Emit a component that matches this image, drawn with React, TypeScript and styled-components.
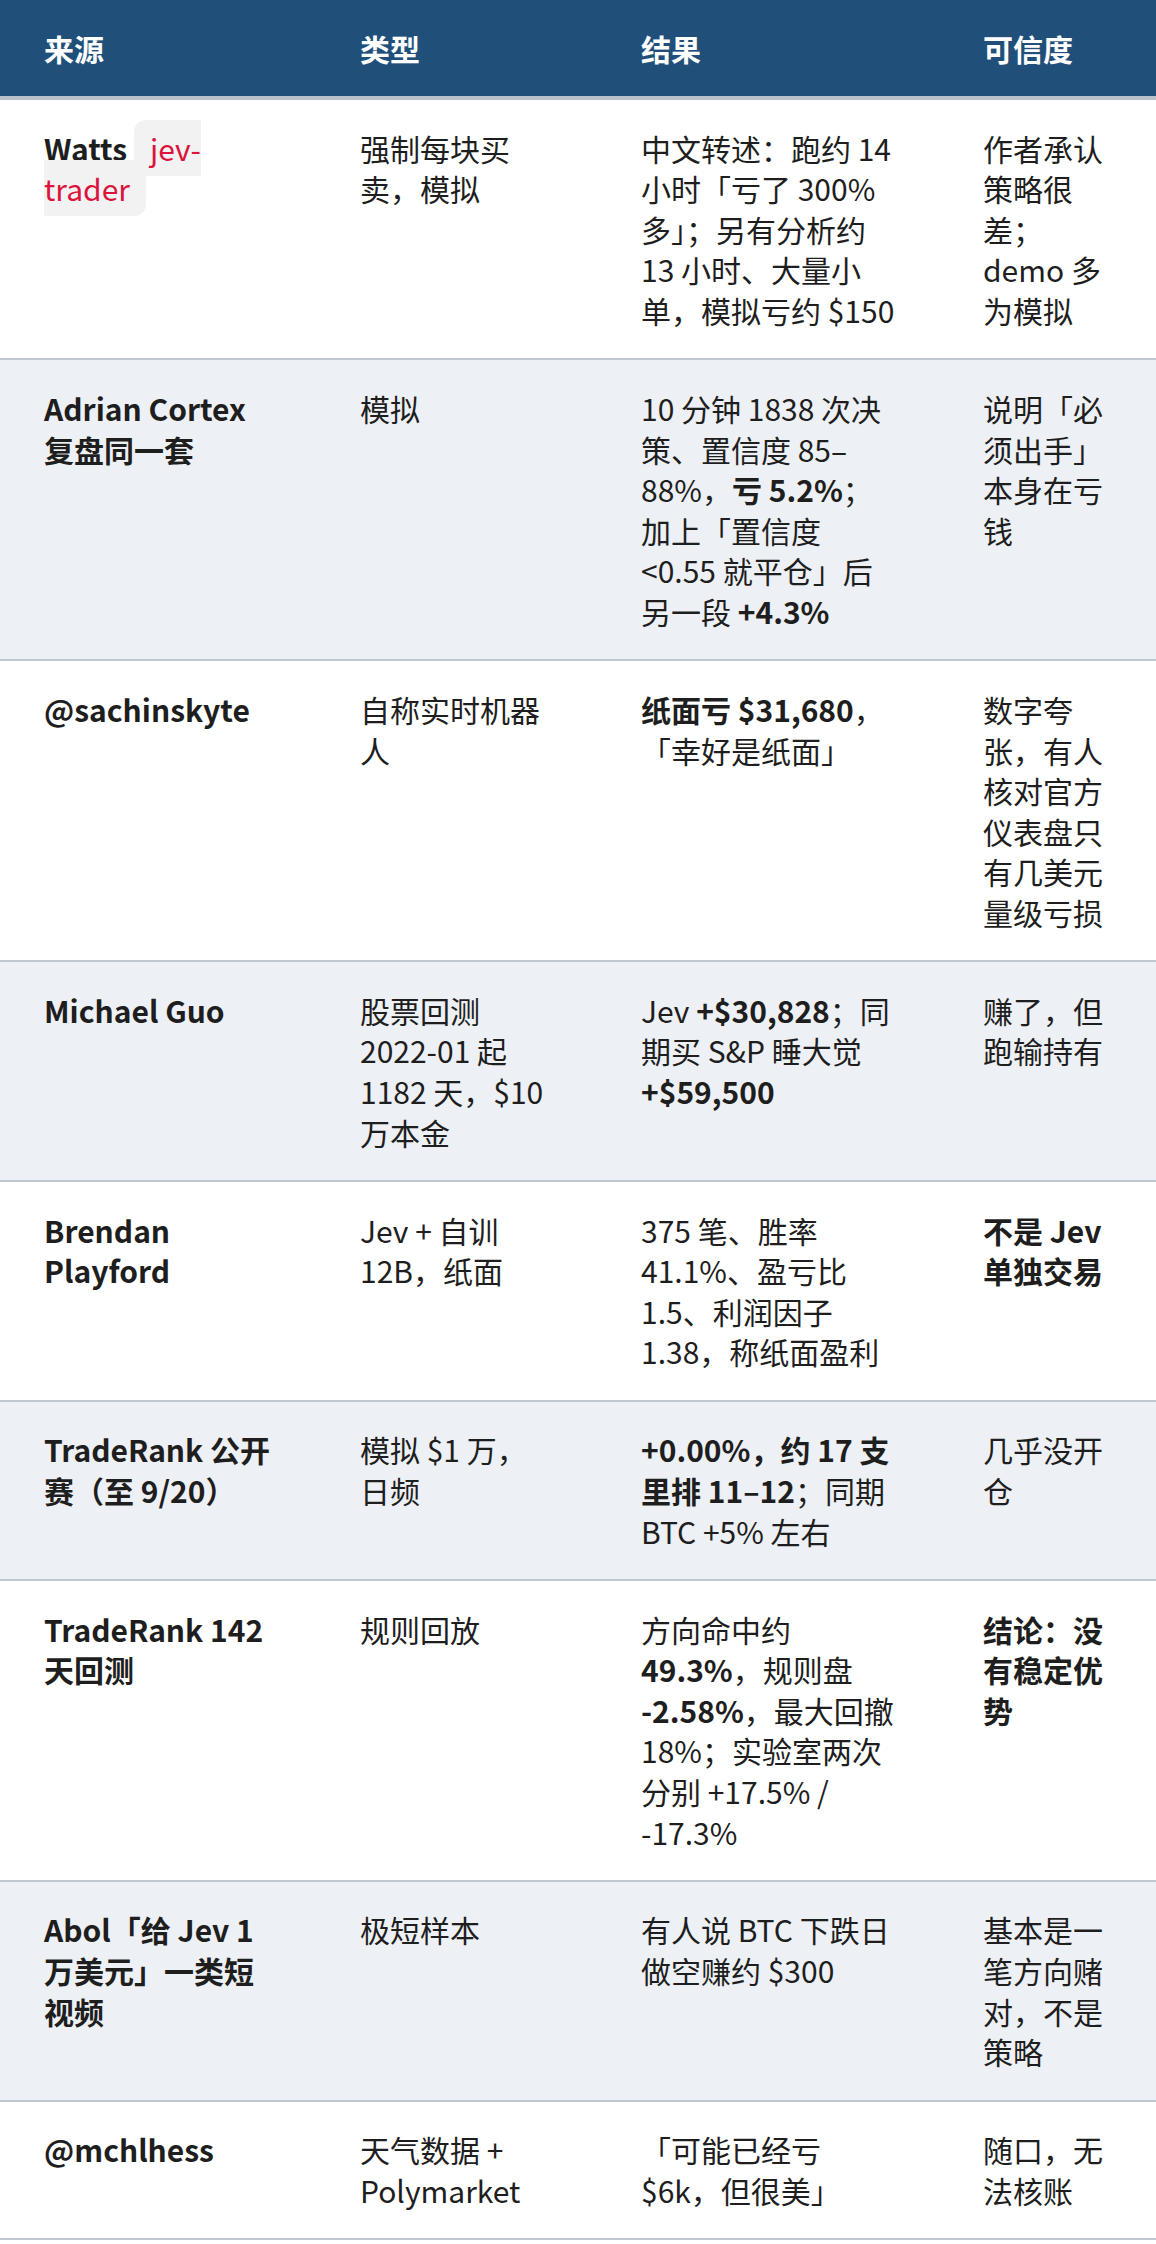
import React from 'react';
import styled, { createGlobalStyle } from 'styled-components';

const GlobalStyle = createGlobalStyle`
    html, body {
        margin: 0;
        padding: 0;
        background: #fff;
    }
    body {
        font-family: 'Noto Sans CJK SC', 'Noto Sans', sans-serif;
        color: #1e1e1e;
    }
`;

const Table = styled.table`
    width: 1156px;
    table-layout: fixed;
    border-collapse: collapse;
    border-spacing: 0;
    font-size: 30px;
    line-height: 40.6px;
`;

const Col = styled.col<{ $w: number }>`
    width: ${(p) => p.$w}px;
`;

const HeadCell = styled.th`
    background: #204f7a;
    color: #fff;
    font-weight: 700;
    text-align: left;
    padding: 27.7px 44px;
    border-bottom: 4px solid #b9c1cb;
`;

const BodyRow = styled.tr<{ $alt: boolean }>`
    background: ${(p) => (p.$alt ? '#edf0f4' : '#fff')};
    border-bottom: 2px solid #c1c7d0;
`;

const Cell = styled.td`
    vertical-align: top;
    text-align: left;
    padding: 27.7px 44px;
    font-weight: 400;
`;

const SourceCell = styled(Cell)`
    font-weight: 700;
`;

const B = styled.strong`
    font-weight: 700;
`;

const Code = styled.code`
    font-family: inherit;
    font-weight: 400;
    color: #dc143c;
    background: #f2f2f2;
    padding: 6px 16px;
    border-radius: 12px;
`;

type Row = {
    source: React.ReactNode;
    kind: React.ReactNode;
    result: React.ReactNode;
    trust: React.ReactNode;
};

const rows: Row[] = [
    {
        source: (
            <>
                Watts <Code>jev-trader</Code>
            </>
        ),
        kind: '强制每块买卖，模拟',
        result: '中文转述：跑约 14 小时「亏了 300% 多」；另有分析约 13 小时、大量小单，模拟亏约 $150',
        trust: '作者承认策略很差；demo 多为模拟',
    },
    {
        source: 'Adrian Cortex 复盘同一套',
        kind: '模拟',
        result: (
            <>
                10 分钟 1838 次决策、置信度 85–88%，<B>亏 5.2%</B>；加上「置信度 &lt;0.55 就平仓」后另一段{' '}
                <B>+4.3%</B>
            </>
        ),
        trust: '说明「必须出手」本身在亏钱',
    },
    {
        source: '@sachinskyte',
        kind: '自称实时机器人',
        result: (
            <>
                <B>纸面亏 $31,680</B>，「幸好是纸面」
            </>
        ),
        trust: '数字夸张，有人核对官方仪表盘只有几美元量级亏损',
    },
    {
        source: 'Michael Guo',
        kind: '股票回测 2022-01 起 1182 天，$10 万本金',
        result: (
            <>
                Jev <B>+$30,828</B>；同期买 S&amp;P 睡大觉 <B>+$59,500</B>
            </>
        ),
        trust: '赚了，但跑输持有',
    },
    {
        source: 'Brendan Playford',
        kind: 'Jev + 自训 12B，纸面',
        result: '375 笔、胜率 41.1%、盈亏比 1.5、利润因子 1.38，称纸面盈利',
        trust: <B>不是 Jev 单独交易</B>,
    },
    {
        source: 'TradeRank 公开赛（至 9/20）',
        kind: '模拟 $1 万，日频',
        result: (
            <>
                <B>+0.00%，约 17 支里排 11–12</B>；同期 BTC +5% 左右
            </>
        ),
        trust: '几乎没开仓',
    },
    {
        source: 'TradeRank 142 天回测',
        kind: '规则回放',
        result: (
            <>
                方向命中约 <B>49.3%</B>，规则盘 <B>-2.58%</B>，最大回撤 18%；实验室两次分别 +17.5% / -17.3%
            </>
        ),
        trust: <B>结论：没有稳定优势</B>,
    },
    {
        source: 'Abol「给 Jev 1 万美元」一类短视频',
        kind: '极短样本',
        result: '有人说 BTC 下跌日做空赚约 $300',
        trust: '基本是一笔方向赌对，不是策略',
    },
    {
        source: '@mchlhess',
        kind: '天气数据 + Polymarket',
        result: '「可能已经亏 $6k，但很美」',
        trust: '随口，无法核账',
    },
];

export default function App() {
    return (
        <>
            <GlobalStyle />
            <Table>
                <colgroup>
                    <Col $w={316} />
                    <Col $w={281} />
                    <Col $w={342} />
                    <Col $w={217} />
                </colgroup>
                <thead>
                    <tr>
                        <HeadCell>来源</HeadCell>
                        <HeadCell>类型</HeadCell>
                        <HeadCell>结果</HeadCell>
                        <HeadCell>可信度</HeadCell>
                    </tr>
                </thead>
                <tbody>
                    {rows.map((r, i) => (
                        <BodyRow key={i} $alt={i % 2 === 1}>
                            <SourceCell>{r.source}</SourceCell>
                            <Cell>{r.kind}</Cell>
                            <Cell>{r.result}</Cell>
                            <Cell>{r.trust}</Cell>
                        </BodyRow>
                    ))}
                </tbody>
            </Table>
        </>
    );
}
